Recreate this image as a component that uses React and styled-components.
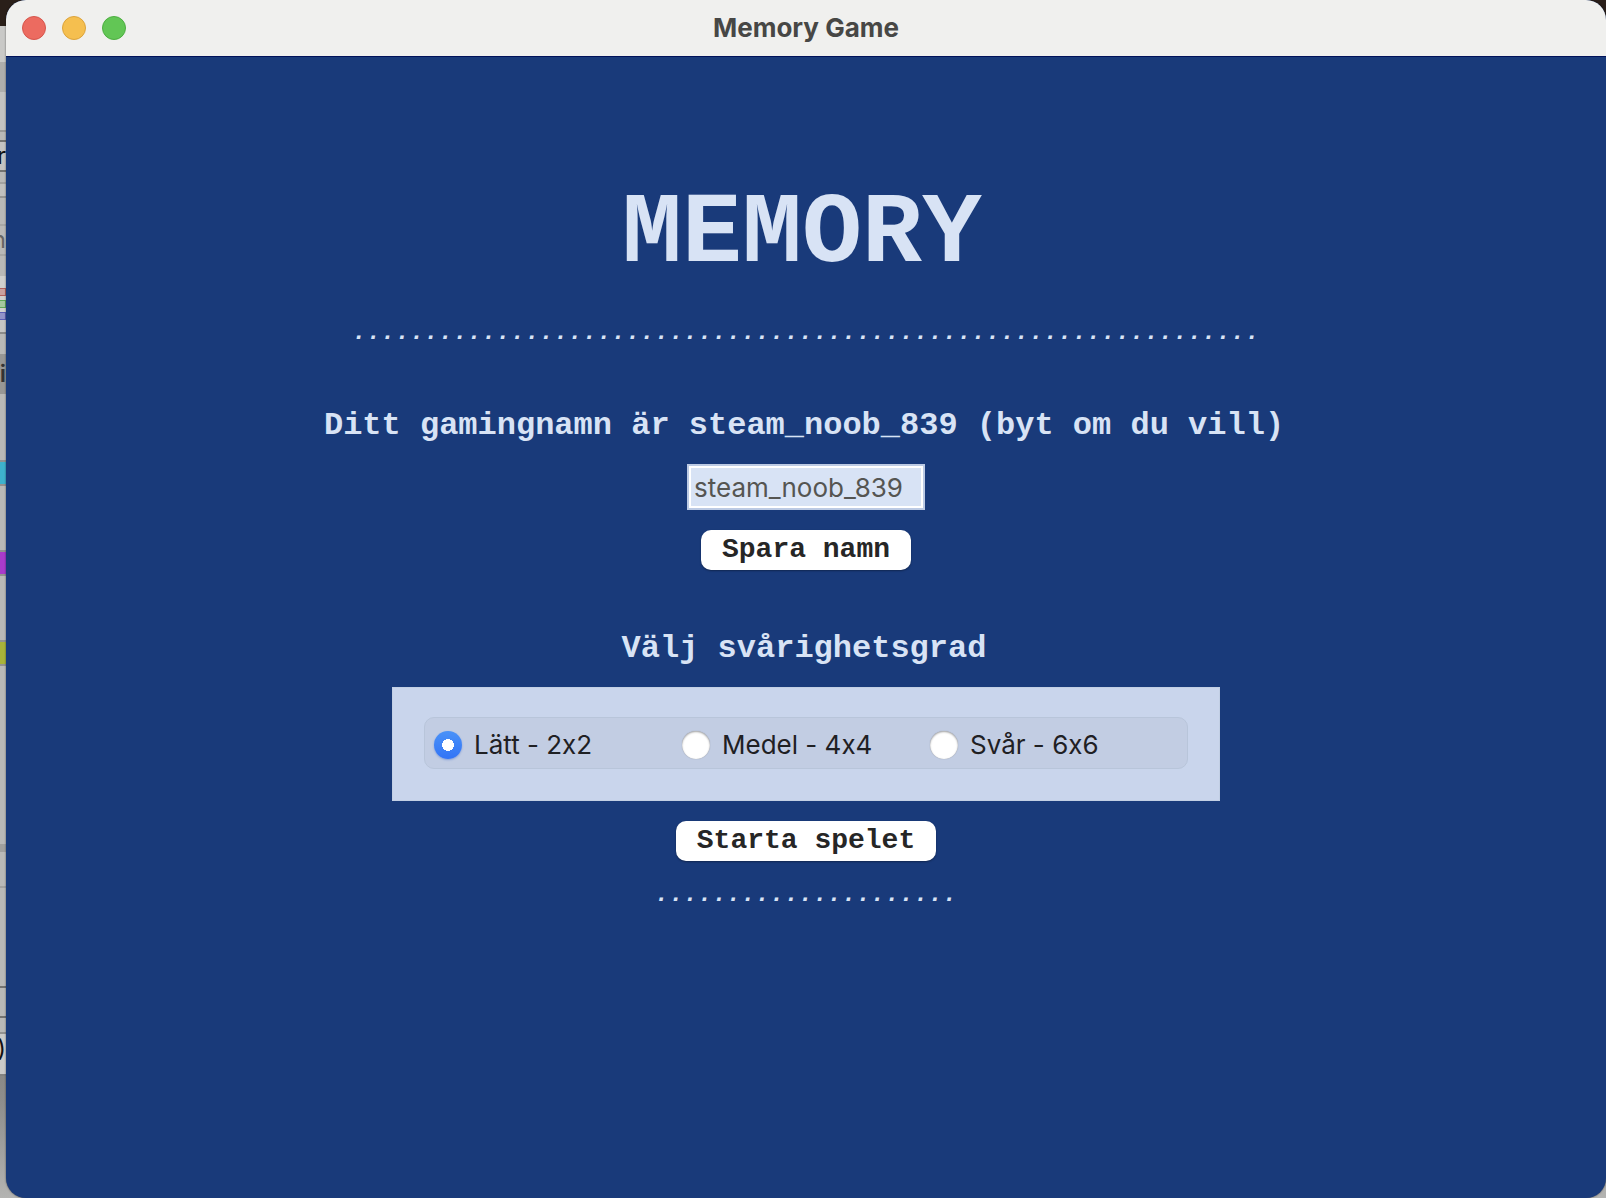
import React, { useState } from "react";
import styled, { createGlobalStyle } from "styled-components";

const ui = `Inter, "Liberation Sans", sans-serif`;
const mono = `"Liberation Mono", "Courier New", monospace`;
const navy = "#193a7a";
const pale = "#d8e3f5";

const GlobalStyle = createGlobalStyle`
  *, *::before, *::after { box-sizing: border-box; }
  body { margin: 0; background: #2a1f19; font-family: ${ui}; }
`;

const Desktop = styled.div`
  position: relative;
  display: flex;
  min-height: 100vh;
  padding-left: 6px;
  overflow: hidden;
  background: linear-gradient(to bottom, #2a1f19 0 40%, #8e8e8c 92%, #b4b4b2 100%);
`;

const BackWindow = styled.div`
  position: absolute;
  top: 26px;
  left: 0;
  width: 6px;
  overflow: hidden;
  background: #b9b9b7;
`;

const Strip = styled.div`
  display: flex;
  justify-content: flex-end;
  align-items: center;
  height: ${(p) => p.$h}px;
  background: ${(p) => p.$bg || "transparent"};
  border: ${(p) => (p.$edge ? `1px solid ${p.$edge}` : "0")};
  border-left: 0;
  color: ${(p) => p.$ink || "#111"};
  font-size: 24px;
  line-height: 24px;
  font-weight: ${(p) => (p.$bold ? 600 : 400)};
`;

const Window = styled.main`
  position: relative;
  flex: 1;
  display: flex;
  flex-direction: column;
  border-radius: 20px;
  overflow: hidden;
  background: ${navy};
  box-shadow: 0 0 2px rgba(0, 0, 0, 0.6);
`;

const TitleBar = styled.header`
  display: grid;
  grid-template-columns: 1fr auto 1fr;
  align-items: center;
  height: 57px;
  padding: 0 16px;
  background: #f0f0ee;
  border-bottom: 1px solid #00125a;
`;

const Lights = styled.div`
  display: flex;
  gap: 16px;
`;

const Light = styled.button`
  width: 24px;
  height: 24px;
  padding: 0;
  border: 1px solid ${(p) => p.$edge};
  border-radius: 50%;
  background: ${(p) => p.$fill};
`;

const WindowTitle = styled.span`
  font-size: 26px;
  line-height: 32px;
  font-weight: 700;
  color: #474745;
`;

const Content = styled.form`
  display: flex;
  flex-direction: column;
  align-items: center;
  padding: 122px 24px 24px;
  color: ${pale};
  font-family: ${mono};
`;

const GameTitle = styled.h1`
  margin: 0;
  padding-right: 8px;
  font-size: 100px;
  line-height: 112px;
  font-weight: 700;
`;

const Dots = styled.p`
  margin: ${(p) => p.$top}px 0 0;
  font-size: 24px;
  line-height: 28px;
  font-style: italic;
  font-weight: 700;
  white-space: nowrap;
`;

const Heading = styled.label`
  margin: ${(p) => p.$top}px 0 0;
  padding-right: 4px;
  font-size: 32px;
  line-height: 36px;
  font-weight: 700;
  white-space: nowrap;
`;

const NameInput = styled.input`
  width: 238px;
  height: 46px;
  margin-top: 20px;
  padding: 0 5px;
  border: 2px solid #fff;
  outline: 2px solid #bccae4;
  outline-offset: -2px;
  box-shadow: inset 0 0 0 2px #fff;
  border-radius: 0;
  background: ${pale};
  color: #555552;
  font-family: ${ui};
  font-size: 26px;
`;

const Button = styled.button`
  height: 40px;
  margin-top: 20px;
  padding: 0 21px;
  border: 0;
  border-radius: 10px;
  background: #fff;
  color: #262626;
  box-shadow: 0 1px 2px rgba(0, 0, 0, 0.35);
  font-family: ${mono};
  font-size: 28px;
  line-height: 40px;
  font-weight: 700;
`;

const Panel = styled.div`
  width: 828px;
  margin-top: 20px;
  padding: 30px 32px 32px;
  background: #c9d5ec;
  box-shadow: inset 0 0 0 1px #c2cfe4;
`;

const Options = styled.div`
  display: grid;
  grid-template-columns: repeat(3, 248px);
  align-items: center;
  height: 52px;
  padding: 4px 0 0 9px;
  border: 1px solid #b8c5da;
  border-radius: 10px;
  background: #c2cde3;
`;

const Option = styled.label`
  display: flex;
  align-items: center;
  gap: 12px;
  color: #1f2023;
  font-family: ${ui};
  font-size: 26px;
  line-height: 32px;
  font-variant-ligatures: no-contextual;
`;

const Radio = styled.input`
  appearance: none;
  width: 28px;
  height: 28px;
  margin: 0;
  border-radius: 50%;
  background: #fff;
  box-shadow: inset 0 1px 2px rgba(0, 0, 0, 0.35), 0 0 1px rgba(0, 0, 0, 0.3);

  &:checked {
    background: radial-gradient(circle, #fff 0 6px, transparent 6px),
      linear-gradient(#4a92f8, #3274f6);
    box-shadow: 0 1px 2px rgba(40, 90, 200, 0.4);
  }
`;

const backdrop = [
  { $h: 36, $bg: "#c9c9c7" },
  { $h: 30, $bg: "#aeaeac" },
  { $h: 38, $bg: "#c3c3c1" },
  { $h: 2, $bg: "#999997" },
  { $h: 8 },
  { $h: 2, $bg: "#737371" },
  { $h: 28, $bg: "#c4c4c2", text: "r" },
  { $h: 2, $bg: "#737371" },
  { $h: 10 },
  { $h: 2, $bg: "#a2a2a0" },
  { $h: 12, $bg: "#c0c0be" },
  { $h: 2, $bg: "#969694" },
  { $h: 26 },
  { $h: 2, $bg: "#a8a8a6" },
  { $h: 28, text: "n", $ink: "#666664" },
  { $h: 2, $bg: "#a8a8a6" },
  { $h: 20 },
  { $h: 12, $bg: "#d0d0ce" },
  { $h: 8, $bg: "#c9a09e", $edge: "#b0605e" },
  { $h: 4, $bg: "#d0d0ce" },
  { $h: 8, $bg: "#a4c99e", $edge: "#5fa858" },
  { $h: 4, $bg: "#d0d0ce" },
  { $h: 8, $bg: "#9293c8", $edge: "#5d5fb5" },
  { $h: 12, $bg: "#c6c6c4" },
  { $h: 2, $bg: "#8c8c8a" },
  { $h: 20 },
  { $h: 40, $bg: "#979795", text: "i", $ink: "#333", $bold: true },
  { $h: 66 },
  { $h: 2, $bg: "#929290" },
  { $h: 22, $bg: "#3eb2cd" },
  { $h: 2, $bg: "#929290" },
  { $h: 64 },
  { $h: 2, $bg: "#929290" },
  { $h: 22, $bg: "#a93bcb" },
  { $h: 2, $bg: "#929290" },
  { $h: 64 },
  { $h: 2, $bg: "#929290" },
  { $h: 22, $bg: "#a8b33a" },
  { $h: 2, $bg: "#929290" },
  { $h: 178 },
  { $h: 8, $bg: "#a0a09e" },
  { $h: 34 },
  { $h: 2, $bg: "#a2a2a0" },
  { $h: 98 },
  { $h: 2, $bg: "#737371" },
  { $h: 28 },
  { $h: 2, $bg: "#737371" },
  { $h: 14 },
  { $h: 2, $bg: "#929290" },
  { $h: 30, $bg: "#cbcbc9", text: ")" },
  { $h: 10, $bg: "#cbcbc9" },
  { $h: 2, $bg: "#838381" },
];

const levels = [
  { id: "easy", text: "Lätt - 2x2" },
  { id: "medium", text: "Medel - 4x4" },
  { id: "hard", text: "Svår - 6x6" },
];

export default function App() {
  const [name, setName] = useState("steam_noob_839");
  const [player, setPlayer] = useState(name);
  const [level, setLevel] = useState("easy");

  return (
    <>
      <GlobalStyle />
      <Desktop>
        <BackWindow aria-hidden="true">
          {backdrop.map(({ text, ...look }, i) => (
            <Strip key={i} {...look}>{text}</Strip>
          ))}
        </BackWindow>
        <Window>
          <TitleBar>
            <Lights>
              <Light type="button" aria-label="Close" $fill="#ec6b60" $edge="#d5564c" />
              <Light type="button" aria-label="Minimize" $fill="#f5bf4f" $edge="#dba33c" />
              <Light type="button" aria-label="Zoom" $fill="#62c655" $edge="#4dae41" />
            </Lights>
            <WindowTitle>Memory Game</WindowTitle>
          </TitleBar>
          <Content onSubmit={(e) => e.preventDefault()}>
            <GameTitle>MEMORY</GameTitle>
            <Dots $top={28}>{".".repeat(63)}</Dots>
            <Heading $top={61} htmlFor="player">
              Ditt gamingnamn är {player} (byt om du vill)
            </Heading>
            <NameInput id="player" value={name} onChange={(e) => setName(e.target.value)} />
            <Button type="button" onClick={() => setPlayer(name)}>Spara namn</Button>
            <Heading as="h2" id="level-heading" $top={61}>Välj svårighetsgrad</Heading>
            <Panel>
              <Options role="radiogroup" aria-labelledby="level-heading">
                {levels.map(({ id, text }) => (
                  <Option key={id}>
                    <Radio type="radio" name="level" checked={level === id} onChange={() => setLevel(id)} />
                    {text}
                  </Option>
                ))}
              </Options>
            </Panel>
            <Button type="submit">Starta spelet</Button>
            <Dots $top={20}>{".".repeat(21)}</Dots>
          </Content>
        </Window>
      </Desktop>
    </>
  );
}
